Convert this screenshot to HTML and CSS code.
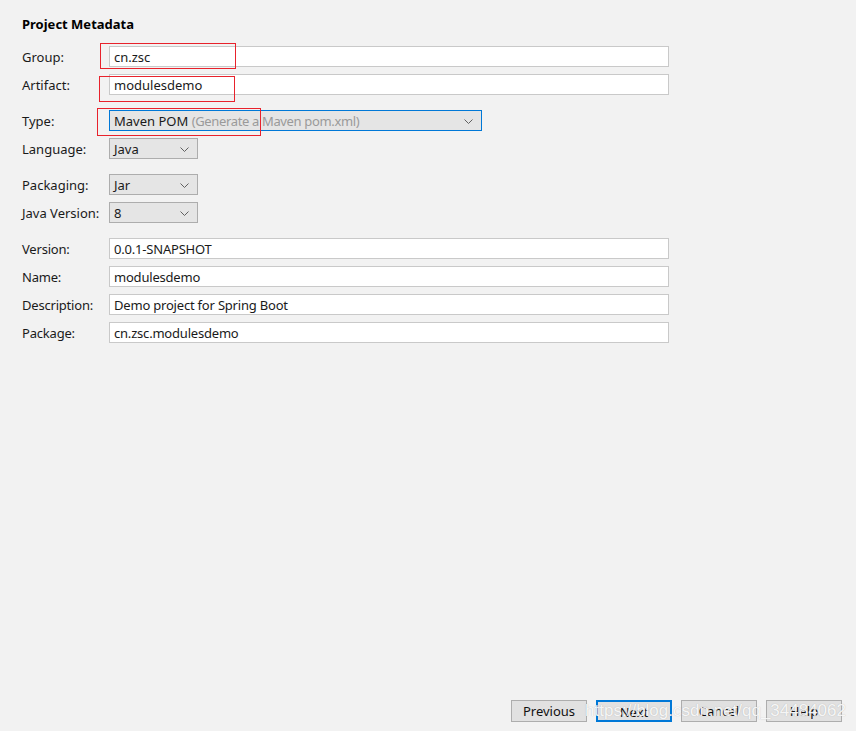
FILE: index.html
```html
<!DOCTYPE html>
<html>
<head>
<meta charset="utf-8">
<link rel="stylesheet" href="styles.css">
</head>
<body>
<div class="page">
  <div class="panel">
    <h1 class="title">Project Metadata</h1>
    <div class="group">
      <div class="row"><span class="label">Group:</span><div class="field wide"><div class="input">cn.zsc</div><div class="mark mark-group"></div></div></div>
      <div class="row"><span class="label">Artifact:</span><div class="field wide"><div class="input">modulesdemo</div><div class="mark mark-artifact"></div></div></div>
    </div>
    <div class="group">
      <div class="row"><span class="label">Type:</span><div class="field"><div class="select type-select focused"><span>Maven POM <span class="hint">(Generate a Maven pom.xml)</span></span><svg class="chev" width="9" height="5" viewBox="0 0 9 5"><path d="M0.5 0.5 L4.5 4.5 L8.5 0.5" fill="none" stroke="#606060" stroke-width="1"/></svg></div><div class="mark mark-type"></div></div></div>
      <div class="row"><span class="label">Language:</span><div class="field"><div class="select small"><span>Java</span><svg class="chev" width="9" height="5" viewBox="0 0 9 5"><path d="M0.5 0.5 L4.5 4.5 L8.5 0.5" fill="none" stroke="#606060" stroke-width="1"/></svg></div></div></div>
    </div>
    <div class="group">
      <div class="row"><span class="label">Packaging:</span><div class="field"><div class="select small"><span>Jar</span><svg class="chev" width="9" height="5" viewBox="0 0 9 5"><path d="M0.5 0.5 L4.5 4.5 L8.5 0.5" fill="none" stroke="#606060" stroke-width="1"/></svg></div></div></div>
      <div class="row"><span class="label">Java Version:</span><div class="field"><div class="select small"><span>8</span><svg class="chev" width="9" height="5" viewBox="0 0 9 5"><path d="M0.5 0.5 L4.5 4.5 L8.5 0.5" fill="none" stroke="#606060" stroke-width="1"/></svg></div></div></div>
    </div>
    <div class="group narrow">
      <div class="row"><span class="label">Version:</span><div class="field wide"><div class="input">0.0.1-SNAPSHOT</div></div></div>
      <div class="row"><span class="label">Name:</span><div class="field wide"><div class="input">modulesdemo</div></div></div>
      <div class="row"><span class="label">Description:</span><div class="field wide"><div class="input">Demo project for Spring Boot</div></div></div>
      <div class="row"><span class="label">Package:</span><div class="field wide"><div class="input">cn.zsc.modulesdemo</div></div></div>
    </div>
  </div>
  <div class="footer">
    <button class="btn">Previous</button>
    <button class="btn default">Next</button>
    <button class="btn">Cancel</button>
    <button class="btn">Help</button>
    <div class="watermark">https://blog.csdn.net/qq_34484062</div>
  </div>
</div>
</body>
</html>
```
FILE: styles.css
```css
html, body {
  margin: 0;
  padding: 0;
  background: #f2f2f2;
}
body {
  font-family: "Noto Sans", "Noto Sans CJK SC", sans-serif;
  font-size: 13px;
  color: #1a1a1a;
}
.page {
  width: 856px;
  height: 731px;
  display: flex;
  flex-direction: column;
  position: relative;
}
.panel {
  padding: 15px 0 0 22px;
  display: flex;
  flex-direction: column;
}
.title {
  margin: 0 0 13px 0;
  font-size: 13px;
  font-weight: bold;
  line-height: 18px;
  color: #000;
}
.group {
  display: flex;
  flex-direction: column;
  gap: 7px;
  margin-bottom: 15px;
}
.row {
  display: flex;
  align-items: center;
  height: 21px;
}
.label {
  width: 87px;
  flex: none;
  line-height: 21px;
  padding-top: 1px;
  box-sizing: border-box;
  height: 21px;
}
.narrow .label, .narrow .input {
  letter-spacing: -0.2px;
}
.field {
  position: relative;
  height: 21px;
}
.field.wide {
  width: 560px;
}
.input {
  box-sizing: border-box;
  height: 21px;
  background: #fff;
  border: 1px solid #c9c9c9;
  padding: 1px 4px 0 4px;
  line-height: 18px;
  white-space: nowrap;
}
.select {
  box-sizing: border-box;
  height: 21px;
  background: #e5e5e5;
  border: 1px solid #adadad;
  padding: 1px 8px 0 4px;
  line-height: 18px;
  display: flex;
  align-items: center;
  justify-content: space-between;
  white-space: nowrap;
}
.select.small {
  width: 89px;
}
.type-select {
  width: 373px;
}
.select.focused {
  border-color: #0078d7;
}
.hint {
  color: #9a9a9a;
  letter-spacing: -0.35px;
}
.chev {
  flex: none;
}
.mark {
  position: absolute;
  border: 1px solid #e8222c;
  pointer-events: none;
}
.mark-group {
  left: -9px;
  top: -3px;
  width: 134px;
  height: 24px;
}
.mark-artifact {
  left: -10px;
  top: 2px;
  width: 134px;
  height: 24px;
}
.mark-type {
  left: -12px;
  top: -2px;
  width: 162px;
  height: 26px;
}
.footer {
  margin-top: auto;
  display: flex;
  justify-content: flex-end;
  gap: 9px;
  padding: 0 14px 9px 0;
  position: relative;
}
.btn {
  box-sizing: border-box;
  width: 76px;
  height: 22px;
  margin: 0;
  padding: 0;
  background: #e1e1e1;
  border: 1px solid #adadad;
  font-family: inherit;
  font-size: 13px;
  color: #111;
  line-height: 20px;
}
.btn.default {
  border: 2px solid #0078d7;
}
.watermark {
  position: absolute;
  right: 10px;
  top: 0px;
  font-family: "Liberation Sans", Arial, sans-serif;
  font-size: 17px;
  line-height: 22px;
  color: rgba(255, 255, 255, 0.9);
  text-shadow: 0 0 1px rgba(110, 110, 110, 0.45);
  pointer-events: none;
  white-space: nowrap;
}
```
